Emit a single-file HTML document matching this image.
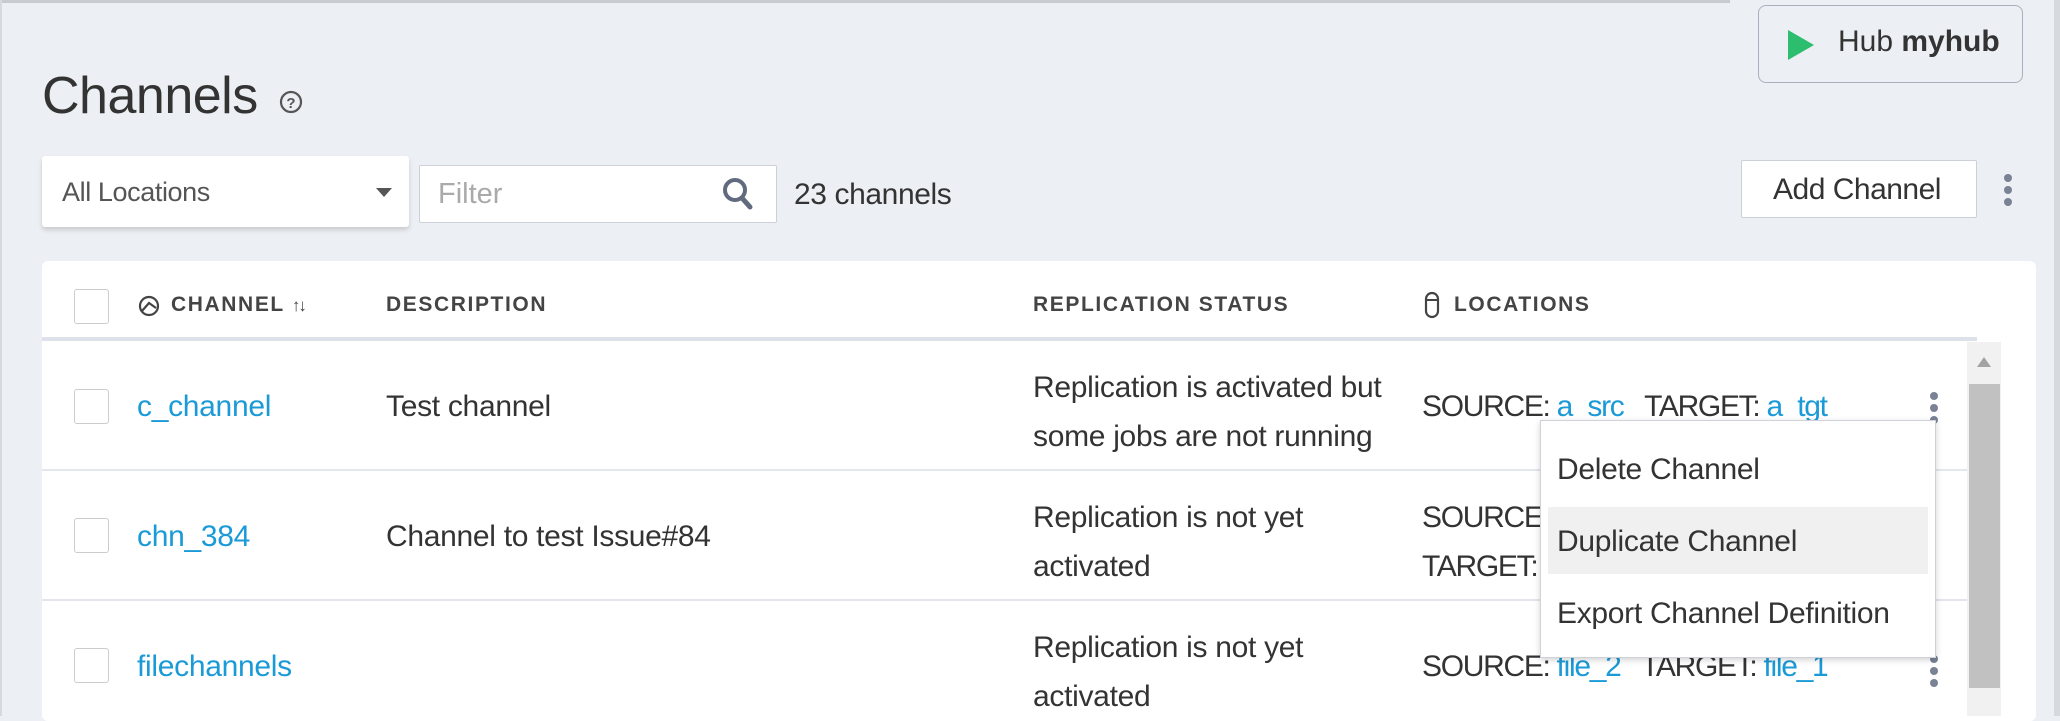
<!DOCTYPE html>
<html><head><meta charset="utf-8"><style>
*{margin:0;padding:0;box-sizing:border-box}
body{width:2060px;height:716px;overflow:hidden;background:#eceff3;font-family:"Liberation Sans",sans-serif;color:#333;position:relative}
.a{position:absolute;white-space:nowrap}
.t{font-size:30px;letter-spacing:-0.3px}
.loc{letter-spacing:-1.3px}
.lnk{color:#1a9ad6}
.hd{font-size:21px;font-weight:bold;letter-spacing:1.6px;color:#444}
.cb{position:absolute;width:35px;height:35px;border:1.5px solid #ccc;border-radius:3px;background:#fff}
.dots{position:absolute;width:8px}
.dots i{display:block;width:8px;height:8px;border-radius:50%;background:#7a8296;margin-bottom:4px}
</style></head><body>
<div class="a" style="left:0;top:0;width:1730px;height:3px;background:#c8cbd0"></div>
<div class="a" style="left:0;top:0;width:2px;height:716px;background:#d6d9de"></div>
<div class="a" style="left:2054px;top:0;width:6px;height:716px;background:#d6d9de"></div>

<div class="a" style="left:42px;top:66px;font-size:52px;color:#333;letter-spacing:-0.5px">Channels</div>
<svg class="a" style="left:278px;top:89px" width="26" height="26" viewBox="0 0 26 26"><circle cx="13" cy="13" r="10" fill="none" stroke="#555" stroke-width="2.2"/><text x="13" y="19" font-size="15" font-family="Liberation Sans" font-weight="bold" text-anchor="middle" fill="#555">?</text></svg>

<div class="a" style="left:1758px;top:5px;width:265px;height:78px;border:1.5px solid #a9afbd;border-radius:8px;background:#eceff3"></div>
<svg class="a" style="left:1788px;top:30px" width="26" height="30"><polygon points="0,0 26,15 0,30" fill="#2dbd6e"/></svg>
<div class="a" style="left:1838px;top:25px;font-size:30px;color:#333">Hub <b>myhub</b></div>

<div class="a" style="left:42px;top:156px;width:367px;height:71px;background:#fff;border-radius:3px;box-shadow:0 3px 5px rgba(0,0,0,0.15)"></div>
<div class="a" style="left:62px;top:177px;font-size:27px;color:#555;letter-spacing:-0.4px">All Locations</div>
<svg class="a" style="left:376px;top:188px" width="16" height="10"><polygon points="0,0 16,0 8,9" fill="#555"/></svg>

<div class="a" style="left:419px;top:165px;width:358px;height:58px;background:#fff;border:1.5px solid #ccd0d8;border-radius:2px"></div>
<div class="a" style="left:438px;top:178px;font-size:29px;color:#aaa">Filter</div>
<svg class="a" style="left:722px;top:177px" width="32" height="34" viewBox="0 0 32 34"><circle cx="13" cy="13" r="10" fill="none" stroke="#616a7f" stroke-width="4"/><line x1="20" y1="21" x2="28" y2="30" stroke="#616a7f" stroke-width="5" stroke-linecap="round"/></svg>
<div class="a" style="left:794px;top:178px;font-size:30px;color:#333;letter-spacing:-0.4px">23 channels</div>

<div class="a" style="left:1741px;top:160px;width:236px;height:58px;background:#fff;border:1.5px solid #ccd0d8;border-radius:2px"></div>
<div class="a" style="left:1773px;top:173px;font-size:30px;color:#333;letter-spacing:-0.5px">Add Channel</div>
<div class="dots" style="left:2004px;top:174px"><i></i><i></i><i></i></div>

<div class="a" style="left:42px;top:261px;width:1994px;height:460px;background:#fff;border-radius:6px"></div>
<div class="a" style="left:42px;top:337px;width:1935px;height:4px;background:#dde1ea"></div>
<div class="cb" style="left:74px;top:289px"></div>
<svg class="a" style="left:137px;top:294px" width="24" height="24" viewBox="0 0 24 24"><circle cx="12" cy="12" r="9" fill="none" stroke="#444" stroke-width="2.2"/><path d="M5 17 L12 9 L19 14" fill="none" stroke="#444" stroke-width="2.2"/></svg>
<div class="a hd" style="left:171px;top:293px">CHANNEL <span style="font-size:17px;letter-spacing:-2px">↑↓</span></div>
<div class="a hd" style="left:386px;top:293px">DESCRIPTION</div>
<div class="a hd" style="left:1033px;top:293px">REPLICATION STATUS</div>
<svg class="a" style="left:1424px;top:291px" width="16" height="28" viewBox="0 0 16 28"><rect x="2" y="2" width="12" height="24" rx="6" fill="none" stroke="#444" stroke-width="2.2"/><line x1="2" y1="9" x2="14" y2="9" stroke="#444" stroke-width="2"/></svg>
<div class="a hd" style="left:1454px;top:293px">LOCATIONS</div>

<div class="a" style="left:42px;top:469px;width:1925px;height:2px;background:#e3e6ec"></div>
<div class="a" style="left:42px;top:599px;width:1925px;height:2px;background:#e3e6ec"></div>

<div class="cb" style="left:74px;top:389px"></div>
<div class="a t lnk" style="left:137px;top:390px">c_channel</div>
<div class="a t" style="left:386px;top:390px">Test channel</div>
<div class="a t" style="left:1033px;top:363px;line-height:49px">Replication is activated but<br>some jobs are not running</div>
<div class="a t loc" style="left:1422px;top:390px">SOURCE: <span class="lnk">a_src</span> &nbsp; TARGET: <span class="lnk">a_tgt</span></div>
<div class="dots" style="left:1930px;top:392px"><i></i><i></i><i></i></div>

<div class="cb" style="left:74px;top:518px"></div>
<div class="a t lnk" style="left:137px;top:520px">chn_384</div>
<div class="a t" style="left:386px;top:520px">Channel to test Issue#84</div>
<div class="a t" style="left:1033px;top:493px;line-height:49px">Replication is not yet<br>activated</div>
<div class="a t loc" style="left:1422px;top:493px;line-height:49px">SOURCE:<br>TARGET:</div>

<div class="cb" style="left:74px;top:648px"></div>
<div class="a t lnk" style="left:137px;top:650px">filechannels</div>
<div class="a t" style="left:1033px;top:623px;line-height:49px">Replication is not yet<br>activated</div>
<div class="a t loc" style="left:1422px;top:650px">SOURCE: <span class="lnk">file_2</span> &nbsp; TARGET: <span class="lnk">file_1</span></div>
<div class="dots" style="left:1930px;top:655px"><i></i><i></i><i></i></div>

<div class="a" style="left:1967px;top:342px;width:34px;height:374px;background:#f1f1f1"></div>
<svg class="a" style="left:1977px;top:357px" width="14" height="10"><polygon points="0,10 14,10 7,0" fill="#a3a3a3"/></svg>
<div class="a" style="left:1969px;top:384px;width:31px;height:304px;background:#c1c1c1"></div>

<div class="a" style="left:1540px;top:420px;width:396px;height:238px;background:#fff;border:1.5px solid #cfd2d8;box-shadow:0 2px 6px rgba(0,0,0,0.18)"></div>
<div class="a" style="left:1548px;top:507px;width:380px;height:67px;background:#f0f0f0"></div>
<div class="a t" style="left:1557px;top:453px">Delete Channel</div>
<div class="a t" style="left:1557px;top:525px">Duplicate Channel</div>
<div class="a t" style="left:1557px;top:597px">Export Channel Definition</div>
</body></html>
